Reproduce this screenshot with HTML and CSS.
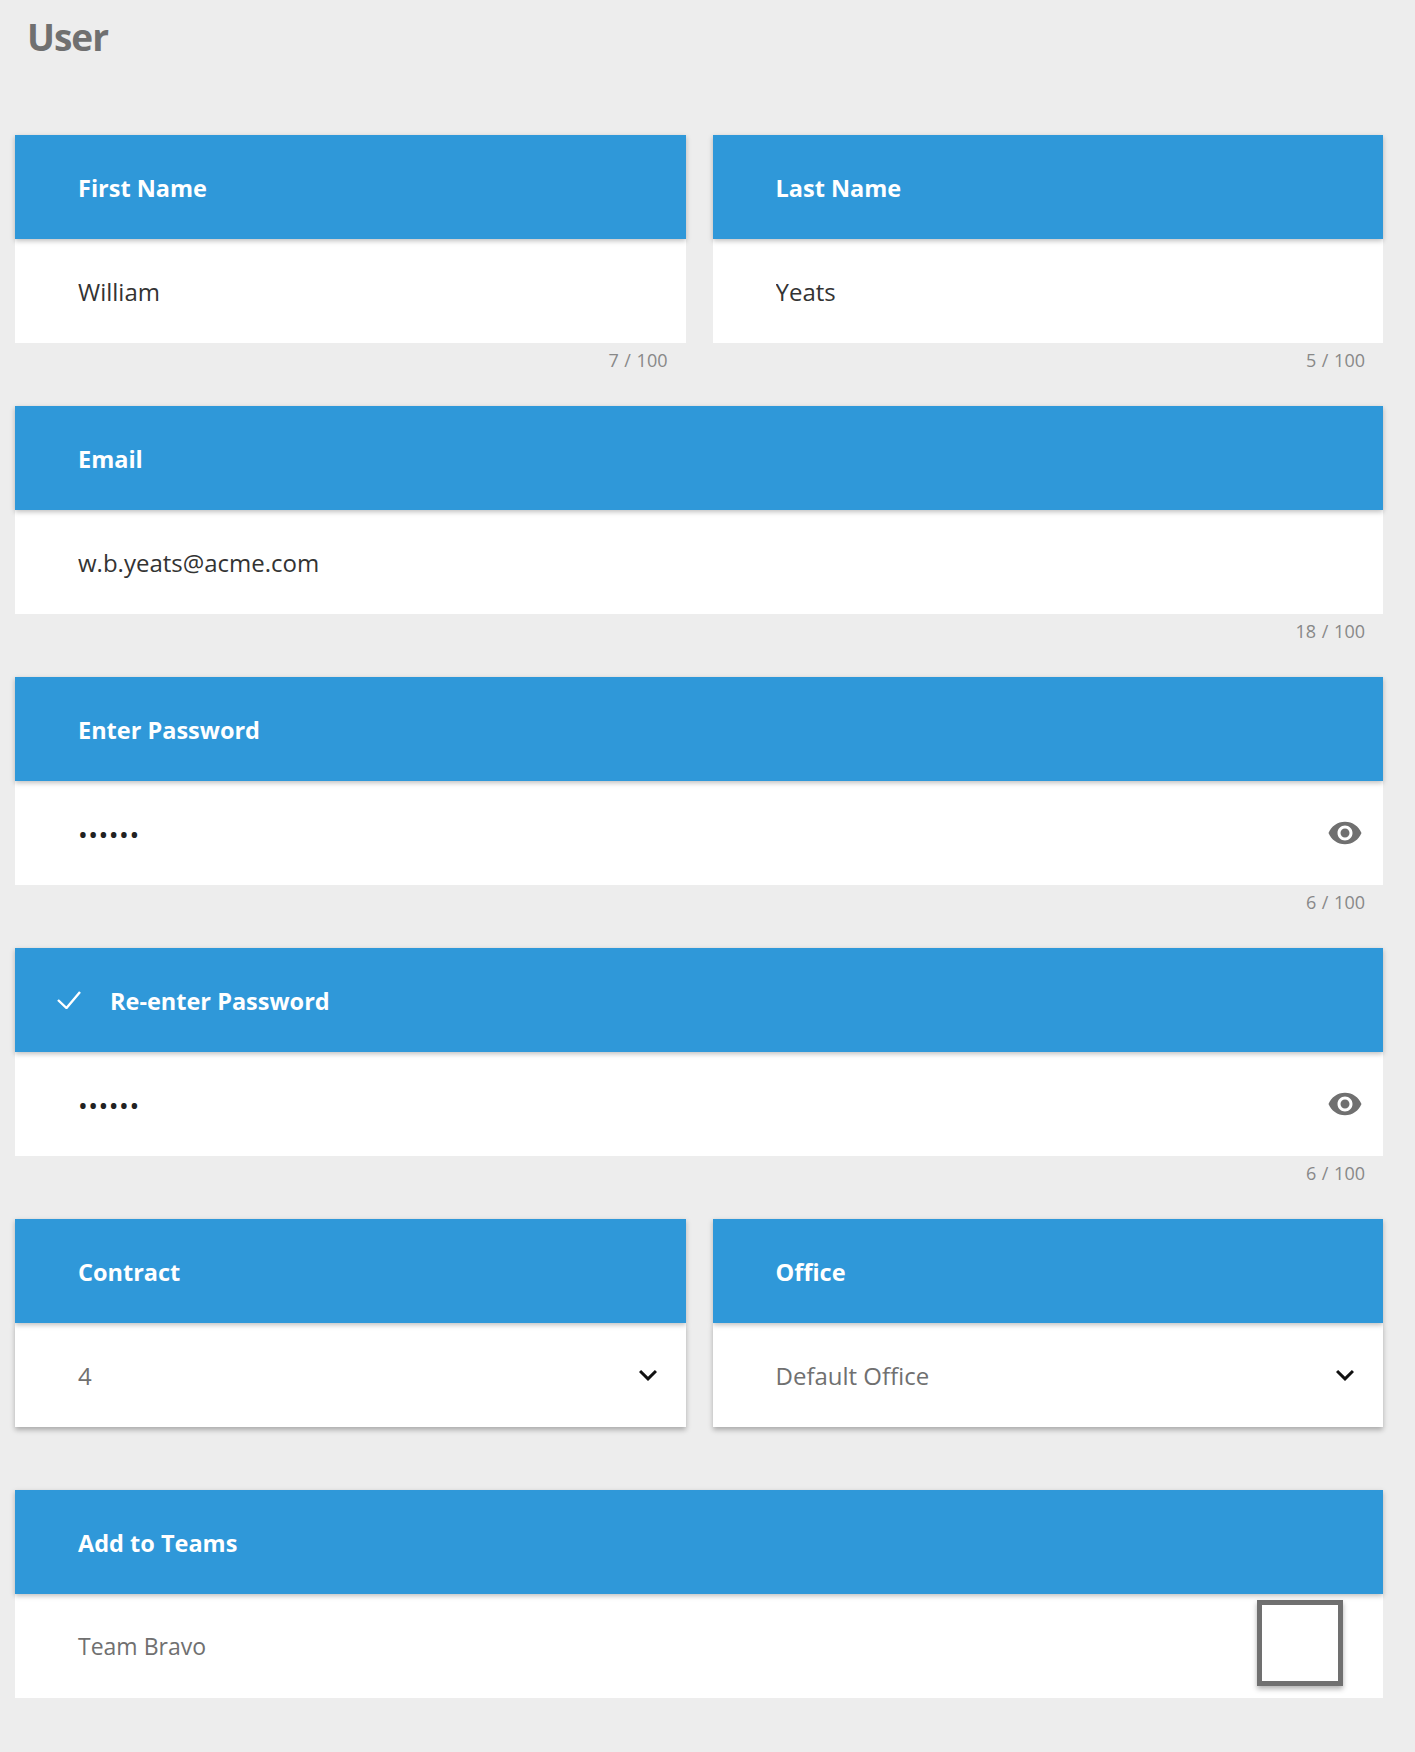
FILE: index.html
```html
<!DOCTYPE html>
<html lang="en">
  <head>
    <meta charset="UTF-8" />
    <meta name="viewport" content="width=device-width, initial-scale=1.0" />
    <title>User</title>
    <link rel="stylesheet" href="styles.css">
  </head>
  <body>
    <h1 class="page-title">User</h1>
    <form class="user-form">
      <div class="field">
        <div class="field-head">First Name</div>
        <div class="field-body">
          <input class="field-input" type="text" value="William" />
        </div>
        <div class="field-foot">7 / 100</div>
      </div>
      <div class="field">
        <div class="field-head">Last Name</div>
        <div class="field-body">
          <input class="field-input" type="text" value="Yeats" />
        </div>
        <div class="field-foot">5 / 100</div>
      </div>
      <div class="field wide">
        <div class="field-head">Email</div>
        <div class="field-body">
          <input class="field-input" type="text" value="w.b.yeats@acme.com" />
        </div>
        <div class="field-foot">18 / 100</div>
      </div>
      <div class="field wide">
        <div class="field-head">Enter Password</div>
        <div class="field-body">
          <span class="dots">••••••</span>
          <svg class="icon eye" viewBox="0 0 24 24"><path d="M12 4.5C7 4.5 2.73 7.61 1 12c1.73 4.39 6 7.5 11 7.5s9.27-3.11 11-7.5c-1.73-4.39-6-7.5-11-7.5zM12 17c-2.76 0-5-2.24-5-5s2.24-5 5-5 5 2.24 5 5-2.24 5-5 5zm0-8c-1.66 0-3 1.34-3 3s1.34 3 3 3 3-1.34 3-3-1.34-3-3-3z"/></svg>
        </div>
        <div class="field-foot">6 / 100</div>
      </div>
      <div class="field wide">
        <div class="field-head with-icon">
          <svg class="check" viewBox="0 0 24 18"><polyline points="1,9 9.5,17 23,1"/></svg>
          Re-enter Password
        </div>
        <div class="field-body">
          <span class="dots">••••••</span>
          <svg class="icon eye" viewBox="0 0 24 24"><path d="M12 4.5C7 4.5 2.73 7.61 1 12c1.73 4.39 6 7.5 11 7.5s9.27-3.11 11-7.5c-1.73-4.39-6-7.5-11-7.5zM12 17c-2.76 0-5-2.24-5-5s2.24-5 5-5 5 2.24 5 5-2.24 5-5 5zm0-8c-1.66 0-3 1.34-3 3s1.34 3 3 3 3-1.34 3-3-1.34-3-3-3z"/></svg>
        </div>
        <div class="field-foot">6 / 100</div>
      </div>
      <div class="field">
        <div class="field-head">Contract</div>
        <div class="field-body select">
          <span class="select-value">4</span>
          <svg class="icon chevron" viewBox="0 0 24 24"><path d="M16.59 8.59L12 13.17 7.41 8.59 6 10l6 6 6-6z"/></svg>
        </div>
        <div class="field-foot"></div>
      </div>
      <div class="field">
        <div class="field-head">Office</div>
        <div class="field-body select">
          <span class="select-value">Default Office</span>
          <svg class="icon chevron" viewBox="0 0 24 24"><path d="M16.59 8.59L12 13.17 7.41 8.59 6 10l6 6 6-6z"/></svg>
        </div>
        <div class="field-foot"></div>
      </div>
      <div class="field wide">
        <div class="field-head">Add to Teams</div>
        <div class="field-body">
          <span class="select-value team">Team Bravo</span>
          <span class="checkbox"></span>
        </div>
      </div>
    </form>
  </body>
</html>
```

FILE: styles.css
```css
html {
  background-color: #ededed;
}
body {
  font-family: "Open Sans", "Noto Sans", sans-serif;
  background-color: #ededed;
  margin: 0;
  padding: 0;
  color: #333333;
  min-height: 1752px;
}
.page-title {
  margin: 0;
  padding: 17px 0 0 27px;
  height: 135px;
  box-sizing: border-box;
  font-size: 37px;
  line-height: 40px;
  letter-spacing: -1px;
  font-weight: 700;
  color: #707070;
}
.user-form {
  width: 1368px;
  margin-left: 15px;
  display: grid;
  grid-template-columns: 1fr 1fr;
  column-gap: 27px;
}
.wide {
  grid-column: 1 / -1;
}
.field-head {
  position: relative;
  z-index: 1;
  height: 104px;
  box-sizing: border-box;
  display: flex;
  align-items: center;
  padding: 2px 0 0 63px;
  background-color: #2f98d9;
  color: #ffffff;
  font-size: 23.5px;
  font-weight: 700;
  box-shadow: 0 2px 5px rgba(0, 0, 0, 0.25);
}
.field-head.with-icon {
  padding-left: 42px;
}
.check {
  width: 24px;
  height: 18px;
  margin: -2px 29px 0 0;
  fill: none;
  stroke: #ffffff;
  stroke-width: 2.4;
}
.field-body {
  height: 104px;
  display: flex;
  align-items: center;
  justify-content: space-between;
  padding: 0 20px 0 63px;
  background-color: #ffffff;
}
.field-body.select {
  box-shadow: 0 3px 5px rgba(0, 0, 0, 0.28);
}
.field-input {
  flex: 1;
  border: none;
  outline: none;
  background: transparent;
  padding: 0;
  font-family: inherit;
  font-size: 24px;
  color: #333333;
}
.dots {
  font-size: 26px;
  color: #222222;
  letter-spacing: 0.5px;
  margin-top: 2px;
}
.select-value {
  font-size: 24px;
  color: #707070;
}
.select-value.team {
  font-size: 23px;
}
.icon {
  width: 36px;
  height: 36px;
}
.eye {
  fill: #707070;
}
.chevron {
  fill: #111111;
}
.field-foot {
  height: 63px;
  box-sizing: border-box;
  padding: 8px 18px 0 0;
  text-align: right;
  font-size: 18px;
  line-height: 18px;
  word-spacing: 1px;
  color: #888888;
}
.checkbox {
  width: 76px;
  height: 76px;
  margin: 0 20px 6px 0;
  border: 5px solid #707070;
  background-color: #ffffff;
  box-shadow: 0 3px 5px rgba(0, 0, 0, 0.3);
}
```
